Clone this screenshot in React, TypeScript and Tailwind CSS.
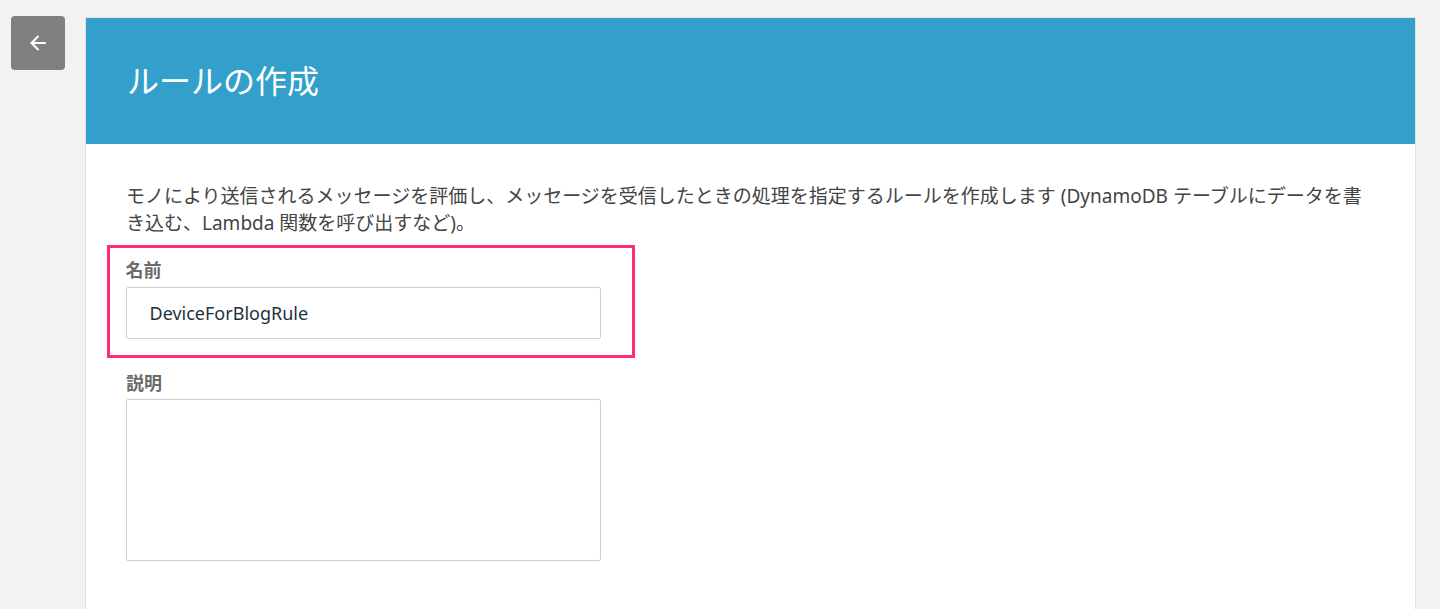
import React from "react";

const font = { fontFamily: '"Noto Sans", "Noto Sans CJK JP", sans-serif' };

function BackButton() {
  return (
    <button
      type="button"
      className="flex h-[54px] w-[54px] shrink-0 items-center justify-center rounded-[4px] bg-[#808080]"
      title="戻る"
    >
      <svg width="18" height="18" viewBox="0 0 18 18" fill="none" stroke="#fff" strokeWidth="2" strokeLinecap="round" strokeLinejoin="round">
        <path d="M16 9H2.5" />
        <path d="M9 2.5L2.5 9L9 15.5" />
      </svg>
    </button>
  );
}

export default function App() {
  return (
    <div className="min-h-screen bg-[#f2f2f2]" style={font}>
      <div className="flex gap-[20px] pl-[11px] pt-[16px] pr-[24px]">
        <BackButton />
        <div className="mt-px w-[1332px] border border-[#e2e2e2] bg-white">
          <div className="flex h-[126px] items-center bg-[#33a0cb] pl-[41px]">
            <h1 className="text-[32px] font-normal leading-none text-white">ルールの作成</h1>
          </div>
          <div className="px-[40px] pt-[39px] pb-[60px]">
            <p className="text-[19px] leading-[27px] text-[#444]">
              モノにより送信されるメッセージを評価し、メッセージを受信したときの処理を指定するルールを作成します (DynamoDB テーブルにデータを書
              <br />
              き込む、Lambda 関数を呼び出すなど)。
            </p>
            <div className="-ml-[19px] mt-[8px] w-[528px] border-[3.5px] border-[#ff2e6e] pl-[15.5px] pt-[12px] pb-[15.5px]">
              <label className="block text-[18px] font-bold leading-[21px] text-[#6b6b6b]">名前</label>
              <input
                className="mt-[6px] block h-[52px] w-[475px] rounded-[2px] border border-[#cfcfcf] bg-white pl-[23px] text-[18px] text-[#1b3340] outline-none"
                defaultValue="DeviceForBlogRule"
              />
            </div>
            <label className="mt-[15px] block text-[18px] font-bold leading-[21px] text-[#6b6b6b]">説明</label>
            <textarea className="mt-[5px] block h-[162px] w-[475px] resize-none rounded-[2px] border border-[#cfcfcf] bg-white outline-none" />
          </div>
        </div>
      </div>
    </div>
  );
}
